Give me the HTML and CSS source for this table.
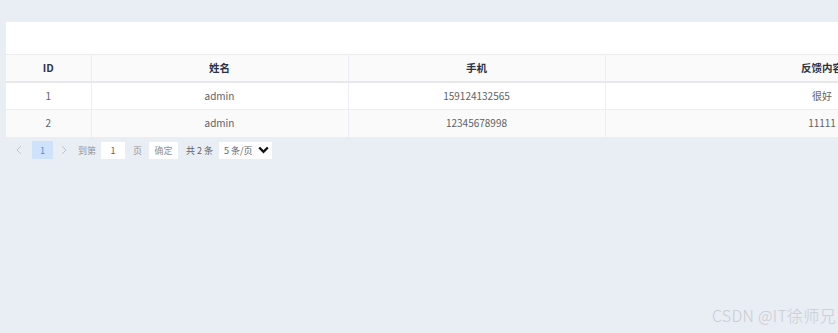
FILE: index.html
```html
<!DOCTYPE html>
<html>
<head>
<meta charset="utf-8">
<link rel="stylesheet" href="styles.css">
</head>
<body>
<div class="page">
  <div class="card">
    <div class="card-top"></div>
    <table class="tbl">
      <colgroup>
        <col class="c-id"><col class="c-name"><col class="c-phone"><col class="c-fb">
      </colgroup>
      <thead>
        <tr><th>ID</th><th>姓名</th><th>手机</th><th>反馈内容</th></tr>
      </thead>
      <tbody>
        <tr><td>1</td><td>admin</td><td>159124132565</td><td>很好</td></tr>
        <tr class="striped"><td>2</td><td>admin</td><td>12345678998</td><td>11111</td></tr>
      </tbody>
    </table>
  </div>
  <div class="pager">
    <span class="arrow">
      <svg width="6" height="10" viewBox="0 0 6 10"><path d="M5 1 L1 5 L5 9" fill="none" stroke="#c0c4cc" stroke-width="1"/></svg>
    </span>
    <span class="pg-num">1</span>
    <span class="arrow">
      <svg width="6" height="10" viewBox="0 0 6 10"><path d="M1 1 L5 5 L1 9" fill="none" stroke="#c0c4cc" stroke-width="1"/></svg>
    </span>
    <span class="lbl first">到第</span>
    <span class="box input">1</span>
    <span class="lbl">页</span>
    <span class="box btn">确定</span>
    <span class="lbl total">共 2 条</span>
    <span class="box select">5 条/页
      <svg class="chev" width="11" height="8" viewBox="0 0 11 8"><path d="M1.2 1.5 L5.5 5.8 L9.8 1.5" fill="none" stroke="#111" stroke-width="2.4"/></svg>
    </span>
  </div>
  <div class="watermark">CSDN @IT徐师兄</div>
</div>
</body>
</html>
```
FILE: styles.css
```css
html, body {
  margin: 0;
  padding: 0;
  background: #e9edf4;
  overflow: hidden;
  width: 838px;
  height: 333px;
}
body {
  font-family: "Noto Sans CJK SC", "Noto Sans", sans-serif;
}
.page {
  position: relative;
  width: 838px;
  height: 333px;
  padding: 22px 0 0 6px;
  box-sizing: border-box;
  overflow: hidden;
}
.card {
  width: 1033px;
  background: #fff;
}
.card-top {
  height: 32px;
}
.tbl {
  border-collapse: collapse;
  table-layout: fixed;
  width: 1033px;
  font-size: 10px;
}
.c-id { width: 85px; }
.c-name { width: 257px; }
.c-phone { width: 257px; }
.c-fb { width: 434px; }
.tbl th, .tbl td {
  border: 1px solid #ebeef5;
  text-align: center;
  padding: 0;
  line-height: 12px;
}
.tbl th {
  height: 25px;
  background: #fafafa;
  color: #2c3345;
  font-weight: 700;
  font-size: 10.5px;
  border-bottom: 2px solid #e6e8ec;
  border-top: 1px solid #ececec;
  padding-bottom: 1px;
}
.tbl td {
  height: 25px;
  color: #606266;
  padding-bottom: 1px;
}
.tbl tr.striped td {
  background: #fafafa;
  border-bottom: none;
  height: 26px;
}
.tbl tr > :first-child { border-left: none; }
.pager {
  display: flex;
  align-items: center;
  height: 18px;
  margin-top: 4px;
  padding-left: 10px;
  font-size: 9px;
  color: #909399;
}
.arrow {
  display: flex;
  align-items: center;
  width: 8px;
}
.pg-num {
  width: 21px;
  height: 18px;
  background: #cfe2fb;
  color: #4a90e2;
  display: flex;
  align-items: center;
  justify-content: center;
  margin: 0 8px 0 8px;
}
.lbl {
  color: #909399;
  margin-right: 7px;
}
.lbl.first { margin-left: 9px; margin-right: 5px; }
.box {
  background: #fff;
  height: 17px;
  display: flex;
  align-items: center;
  color: #606266;
  margin-right: 8px;
}
.input {
  width: 24px;
  justify-content: center;
}
.btn {
  width: 29px;
  justify-content: center;
  color: #909399;
}
.total {
  color: #606266;
  margin-right: 6px;
}
.select {
  width: 47px;
  padding-left: 5px;
  justify-content: space-between;
  padding-right: 1px;
}
.chev { margin-right: 2px; }
.watermark {
  position: absolute;
  right: 2px;
  bottom: 6px;
  font-size: 16px;
  letter-spacing: 0.3px;
  color: #c8ccd3;
  font-family: "Noto Sans CJK SC", "Noto Sans", sans-serif;
  font-weight: 300;
}
```
